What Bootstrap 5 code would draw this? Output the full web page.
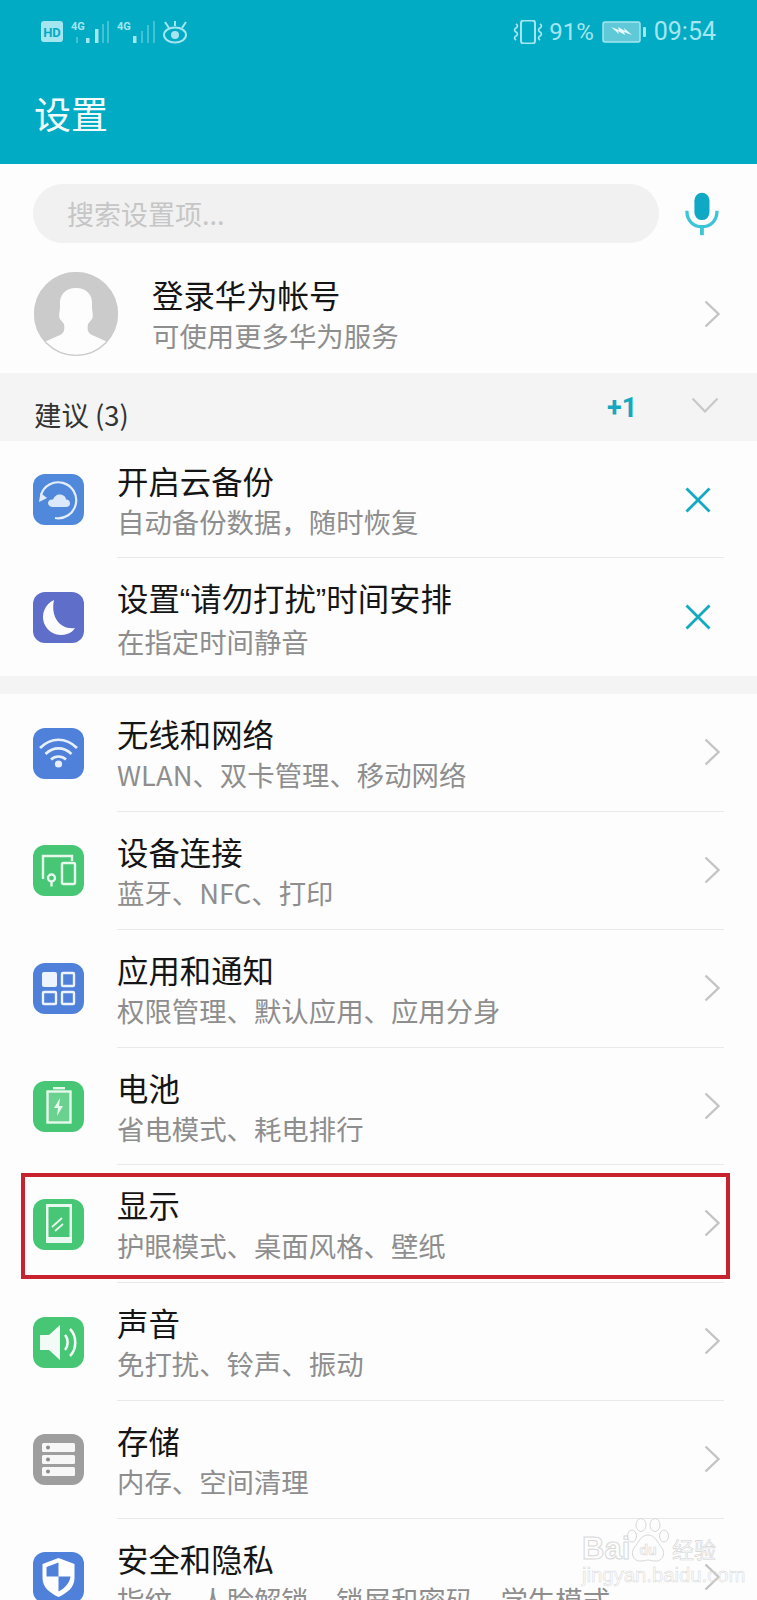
<!DOCTYPE html>
<html lang="zh">
<head>
    <meta charset="UTF-8">
    <title>设置</title>
    <link href="https://cdn.jsdelivr.net/npm/bootstrap@5.3.0/dist/css/bootstrap.min.css" rel="stylesheet">
    <style>
        html, body { height: 1600px; overflow: hidden; }
        body {
            position: relative;
            background: #fdfdfd;
            font-family: "Noto Sans CJK SC", "Noto Sans", sans-serif;
        }

        .app-head { height: 164px; background: #02abc4; color: #fff; padding: 20px 41px 0 34px; }
        .status-line { height: 24px; color: #a4e6ef; font: 24px/24px Roboto, sans-serif; margin-left: 7px; }
        .status-line svg { display: block; flex: none; }
        .status-time { font-size: 25px; }
        .app-title { font-size: 37px; line-height: 48px; margin-top: 45px; color: #f2fcfd; }

        .search-line { height: 79px; padding: 20px 38px 0 33px; }
        .search-box {
            width: 628px; height: 59px; border-radius: 30px; background: #f1f1f1; color: #c6c6c6;
            font-size: 27px; line-height: 59px; padding-left: 34px;
        }
        .mic { margin-left: 26px; margin-top: 8px; }

        .account-line { height: 130px; padding: 29px 37px 0 34px; }
        .avatar { width: 84px; height: 84px; flex: none; margin-right: 34px; }
        .account-text { margin-top: 3px; }
        .account-mark { margin-top: 28px; flex: none; }

        .row-title { font-size: 31.4px; line-height: 40px; color: #151515; white-space: nowrap; }
        .row-sub { font-size: 27.4px; line-height: 40px; color: #8e8e8e; white-space: nowrap; }
        .quote-mark { font-family: "Liberation Sans", sans-serif; }

        .section-head { height: 67.7px; background: #f4f4f4; padding: 0 39px 0 34px; position: relative; }
        .section-name { font-size: 27.4px; line-height: 36px; color: #333; padding-top: 23px; }
        .section-count { position: absolute; left: 607px; top: 17px; font: 700 27px/36px Roboto, sans-serif; color: #14a9bf; }
        .section-fold { position: absolute; left: 691px; top: 24px; }

        .set-row { height: 117.8px; padding: 0 33px; background: transparent; border: 0; border-radius: 0; }
        .set-icon { width: 51px; height: 51px; flex: none; border-radius: 12px; margin-right: 33px; display: block; }
        .set-body { height: 100%; min-width: 0; padding: 20px 4px 0 0; border-bottom: 1.5px solid #e9e9e9; }
        .set-row:last-child .set-body { border-bottom: 0; }
        .end-mark { margin-top: 24px; flex: none; }
        .end-close { margin: 26px 9px 0 0; flex: none; }
        .group-gap { height: 18px; background: #f4f4f4; }

        .red-frame { position: absolute; left: 21px; top: 1173px; width: 709px; height: 106px; border: 4px solid #c9222f; }

        .watermark { position: absolute; left: 582px; top: 1518px; width: 136px; height: 66px; color: transparent; -webkit-text-stroke: 1px #d8d8d8; }
        .wm-bai { position: absolute; left: 0; top: 14px; font: 700 31px/34px "Liberation Sans", sans-serif; }
        .wm-paw { position: absolute; left: 45px; top: 0; }
        .wm-jy { position: absolute; left: 90px; top: 16px; font-size: 22px; line-height: 28px; -webkit-text-stroke: 0.6px #d4d4d4; }
        .wm-url { position: absolute; left: 0; top: 47px; font: 20.3px/20px "Liberation Sans", sans-serif; -webkit-text-stroke: 0.5px #d8d8d8; white-space: nowrap; }
    </style>
</head>

<body>
<svg width="0" height="0" class="position-absolute">
    <symbol id="chev" viewBox="0 0 16 28"><path d="M1.500 1.500 14.500 14 1.500 26.500" fill="none" stroke="#c4c4c4" stroke-width="2.400"/></symbol>
    <symbol id="cross" viewBox="0 0 26 26"><path d="M1.500 1.500 24.500 24.500M24.500 1.500 1.500 24.500" fill="none" stroke="#12aac1" stroke-width="2.800"/></symbol>
</svg>

<header class="app-head">
    <div class="status-line d-flex align-items-center justify-content-between">
        <div class="d-flex align-items-center">
            <svg width="147" height="24" viewBox="0 0 147 24">
                <rect x="0" y="1" width="22" height="21" rx="3" fill="#a4e6ef"/>
                <text x="11" y="17" text-anchor="middle" font-family="Roboto" font-weight="700" font-size="13" fill="#02abc4">HD</text>
                <text x="30" y="10" font-family="Roboto" font-weight="700" font-size="11" fill="#a4e6ef">4G</text>
                <g fill="#a4e6ef">
                    <rect x="45" y="18" width="3.500" height="5"/><rect x="54" y="9" width="3.500" height="14"/>
                    <rect x="92" y="16" width="3.500" height="7"/>
                </g>
                <g fill="#a4e6ef" opacity=".4">
                    <rect x="35" y="17" width="2" height="6"/><rect x="61" y="4" width="2" height="19"/><rect x="66" y="1" width="2" height="22"/>
                    <rect x="100" y="11" width="2" height="12"/><rect x="106" y="5" width="2" height="18"/><rect x="112" y="1" width="2" height="22"/>
                </g>
                <text x="76" y="10" font-family="Roboto" font-weight="700" font-size="11" fill="#a4e6ef">4G</text>
                <g fill="none" stroke="#a4e6ef" stroke-width="2">
                    <ellipse cx="134" cy="15" rx="11" ry="7.500"/>
                    <path d="M124 2l4 6M134 1v5M145 2l-4 6"/>
                </g>
                <circle cx="134" cy="15" r="4" fill="#a4e6ef"/>
            </svg>
        </div>
        <div class="d-flex align-items-center">
            <svg width="32" height="24" viewBox="0 0 32 24">
                <rect x="8" y="0.500" width="14" height="23" rx="2.500" fill="none" stroke="#a4e6ef" stroke-width="2"/>
                <path d="M3 4q3 2 0 4t0 4 0 4 0 4M27 4q3 2 0 4t0 4 0 4 0 4" fill="none" stroke="#a4e6ef" stroke-width="1.600"/>
            </svg>
            <span class="ms-1">91%</span>
            <svg class="ms-2" width="44" height="22" viewBox="0 0 44 22">
                <rect x="1" y="1" width="37" height="20" rx="2" fill="#5fc9d8" stroke="#a4e6ef" stroke-width="1.500"/>
                <rect x="41" y="6" width="3" height="10" rx="1" fill="#a4e6ef"/>
                <path d="M9 6l8 3-1-3 7 4-1-3 8 7-8-3 1 3-7-4 1 3z" fill="#eafafc"/>
            </svg>
            <span class="ms-2 status-time">09:54</span>
        </div>
    </div>
    <div class="app-title">设置</div>
</header>

<div class="search-line d-flex align-items-start">
    <div class="search-box">搜索设置项...</div>
    <svg class="mic" width="34" height="44" viewBox="0 0 36 45">
        <rect x="10" y="0" width="16" height="29" rx="8" fill="#0fa9c6"/>
        <path d="M2 19c0 11 7 17 16 17s16-6 16-17" fill="none" stroke="#3cc4d8" stroke-width="3.500"/>
        <rect x="16" y="35" width="4" height="10" fill="#3cc4d8"/>
    </svg>
</div>

<div class="account-line d-flex align-items-start">
    <svg class="avatar" viewBox="0 0 84 84">
        <defs><clipPath id="avatar-clip"><circle cx="42" cy="42" r="41.500"/></clipPath></defs>
        <circle cx="42" cy="42" r="42" fill="#cbcbcb"/>
        <g clip-path="url(#avatar-clip)">
            <path d="M42 16c-11 0-17 7-16 18 .3 5-2 9 0 13l4 5c1 6 0 9-4 11L8 71 12 84H72L76 71 58 63c-4-2-5-5-4-11l4-5c2-4-.3-8 0-13 1-11-5-18-16-18z" fill="#fdfdfd"/>
        </g>
        <circle cx="42" cy="42" r="41.400" fill="none" stroke="#cbcbcb" stroke-width="1.200"/>
    </svg>
    <div class="account-text flex-grow-1">
        <div class="row-title">登录华为帐号</div>
        <div class="row-sub">可使用更多华为服务</div>
    </div>
    <svg class="account-mark" width="16" height="28"><use href="#chev"/></svg>
</div>

<div class="section-head">
    <div class="section-name">建议 (3)</div>
    <span class="section-count">+1</span>
    <svg class="section-fold" width="28" height="16" viewBox="0 0 28 16"><path d="M1.500 1.500 14 14.500 26.500 1.500" fill="none" stroke="#c8c8c8" stroke-width="2.200"/></svg>
</div>

<div class="list-group list-group-flush">
    <div class="list-group-item set-row d-flex align-items-center">
        <svg class="set-icon" viewBox="0 0 51 51">
            <rect width="51" height="51" fill="#5088dc"/>
            <path d="M8 21A18 18 0 1 1 22 44" fill="none" stroke="#e4eefb" stroke-width="2.200"/>
            <path d="M6 28l1.500-9 6.500 5z" fill="#e4eefb"/>
            <path d="M20 33c-3 0-5-2-5-4s2-4 5-3.500c1-3 3.500-5 6.500-5 4 0 6.500 2.500 6.500 5 2.500 0 4 1.500 4 3.700s-1.500 3.800-4 3.800z" fill="#dce9fa"/>
        </svg>
        <div class="set-body flex-grow-1 d-flex justify-content-between">
            <div>
                <div class="row-title">开启云备份</div>
                <div class="row-sub">自动备份数据，随时恢复</div>
            </div>
            <svg class="end-close" width="26" height="26"><use href="#cross"/></svg>
        </div>
    </div>
    <div class="list-group-item set-row d-flex align-items-center">
        <svg class="set-icon" viewBox="0 0 51 51">
            <rect width="51" height="51" fill="#5f6fc9"/>
            <path d="M21 8C12 12 8 22 11 31c4 10 14 14 23 11 4-1 6-3 8-6-13 2-25-9-21-28z" fill="#fcfcff"/>
        </svg>
        <div class="set-body flex-grow-1 d-flex justify-content-between">
            <div>
                <div class="row-title">设置<span class="quote-mark">“</span>请勿打扰<span class="quote-mark">”</span>时间安排</div>
                <div class="row-sub">在指定时间静音</div>
            </div>
            <svg class="end-close" width="26" height="26"><use href="#cross"/></svg>
        </div>
    </div>
</div>

<div class="group-gap"></div>

<div class="list-group list-group-flush">
    <div class="list-group-item set-row d-flex align-items-center">
        <svg class="set-icon" viewBox="0 0 51 51">
            <rect width="51" height="51" fill="#4f80da"/>
            <g fill="none" stroke="#e6effb" stroke-width="2.600">
                <path d="M7 20c11-11 26-11 37 0"/><path d="M12.500 26c8-7.500 18-7.500 26 0"/><path d="M18 31.500c4.500-4 10.500-4 15 0"/>
            </g>
            <circle cx="25.500" cy="36" r="3.600" fill="#e6effb"/>
        </svg>
        <div class="set-body flex-grow-1 d-flex justify-content-between">
            <div>
                <div class="row-title">无线和网络</div>
                <div class="row-sub">WLAN、双卡管理、移动网络</div>
            </div>
            <svg class="end-mark" width="16" height="28"><use href="#chev"/></svg>
        </div>
    </div>
    <div class="list-group-item set-row d-flex align-items-center">
        <svg class="set-icon" viewBox="0 0 51 51">
            <rect width="51" height="51" fill="#47c675"/>
            <g fill="none" stroke="#e6f8ec" stroke-width="2.400">
                <path d="M10 34V11h29v5"/>
                <rect x="29" y="18" width="13" height="21" rx="1.500"/>
                <circle cx="18.500" cy="33" r="3.500"/>
                <path d="M18.500 36.500v5"/>
            </g>
        </svg>
        <div class="set-body flex-grow-1 d-flex justify-content-between">
            <div>
                <div class="row-title">设备连接</div>
                <div class="row-sub">蓝牙、NFC、打印</div>
            </div>
            <svg class="end-mark" width="16" height="28"><use href="#chev"/></svg>
        </div>
    </div>
    <div class="list-group-item set-row d-flex align-items-center">
        <svg class="set-icon" viewBox="0 0 51 51">
            <rect width="51" height="51" fill="#4f80da"/>
            <rect x="9" y="9" width="15" height="15" rx="2" fill="#eef4fd"/>
            <g fill="none" stroke="#eef4fd" stroke-width="2.400">
                <rect x="29" y="10" width="12" height="13" rx="1"/>
                <rect x="10" y="29" width="13" height="12" rx="1"/>
                <rect x="29" y="29" width="12" height="12" rx="1"/>
            </g>
        </svg>
        <div class="set-body flex-grow-1 d-flex justify-content-between">
            <div>
                <div class="row-title">应用和通知</div>
                <div class="row-sub">权限管理、默认应用、应用分身</div>
            </div>
            <svg class="end-mark" width="16" height="28"><use href="#chev"/></svg>
        </div>
    </div>
    <div class="list-group-item set-row d-flex align-items-center">
        <svg class="set-icon" viewBox="0 0 51 51">
            <rect width="51" height="51" fill="#47c675"/>
            <rect x="14.500" y="10.500" width="23" height="31" fill="#d5f3e0" fill-opacity=".25" stroke="#e6f8ec" stroke-width="2.400"/>
            <rect x="20" y="6" width="12" height="2.400" fill="#e6f8ec"/>
            <path d="M27 17l-6 10h4l-1 8 6-10h-4z" fill="#e6f8ec"/>
        </svg>
        <div class="set-body flex-grow-1 d-flex justify-content-between">
            <div>
                <div class="row-title">电池</div>
                <div class="row-sub">省电模式、耗电排行</div>
            </div>
            <svg class="end-mark" width="16" height="28"><use href="#chev"/></svg>
        </div>
    </div>
    <div class="list-group-item set-row d-flex align-items-center">
        <svg class="set-icon" viewBox="0 0 51 51">
            <rect width="51" height="51" fill="#47c675"/>
            <path d="M13 5h26v39H13z" fill="#e9f9ef"/>
            <rect x="15.500" y="8" width="21" height="30" fill="#47c675"/>
            <path d="M19 28l10-9M22 32l8-7" fill="none" stroke="#e9f9ef" stroke-width="1.800"/>
        </svg>
        <div class="set-body flex-grow-1 d-flex justify-content-between">
            <div>
                <div class="row-title">显示</div>
                <div class="row-sub">护眼模式、桌面风格、壁纸</div>
            </div>
            <svg class="end-mark" width="16" height="28"><use href="#chev"/></svg>
        </div>
    </div>
    <div class="list-group-item set-row d-flex align-items-center">
        <svg class="set-icon" viewBox="0 0 51 51">
            <rect width="51" height="51" fill="#47c675"/>
            <path d="M7 18h9l11-10v35L16 33H7z" fill="#f2fbf5"/>
            <path d="M32 18c3.500 4 3.500 11 0 15M37 12c7 7 7 20 0 27" fill="none" stroke="#f2fbf5" stroke-width="2.600"/>
        </svg>
        <div class="set-body flex-grow-1 d-flex justify-content-between">
            <div>
                <div class="row-title">声音</div>
                <div class="row-sub">免打扰、铃声、振动</div>
            </div>
            <svg class="end-mark" width="16" height="28"><use href="#chev"/></svg>
        </div>
    </div>
    <div class="list-group-item set-row d-flex align-items-center">
        <svg class="set-icon" viewBox="0 0 51 51">
            <rect width="51" height="51" fill="#9e9e9e"/>
            <g fill="#f7f7f7">
                <rect x="9" y="9" width="33" height="9" rx="1.500"/>
                <rect x="9" y="21" width="33" height="9" rx="1.500"/>
                <rect x="9" y="33" width="33" height="9" rx="1.500"/>
            </g>
            <g fill="#8c8c8c">
                <circle cx="15" cy="13.500" r="2"/><circle cx="15" cy="25.500" r="2"/><circle cx="15" cy="37.500" r="2"/>
            </g>
        </svg>
        <div class="set-body flex-grow-1 d-flex justify-content-between">
            <div>
                <div class="row-title">存储</div>
                <div class="row-sub">内存、空间清理</div>
            </div>
            <svg class="end-mark" width="16" height="28"><use href="#chev"/></svg>
        </div>
    </div>
    <div class="list-group-item set-row d-flex align-items-center">
        <svg class="set-icon" viewBox="0 0 51 51">
            <rect width="51" height="51" fill="#4f80da"/>
            <path d="M25.500 6l16 6v14c0 9-7 15-16 19-9-4-16-10-16-19V12z" fill="#fff"/>
            <path d="M25.500 10.500v14H13.500V15zM25.500 24.500h12c-1 7-6 12-12 15z" fill="#4f80da"/>
        </svg>
        <div class="set-body flex-grow-1 d-flex justify-content-between">
            <div>
                <div class="row-title">安全和隐私</div>
                <div class="row-sub">指纹、人脸解锁、锁屏和密码、学生模式</div>
            </div>
            <svg class="end-mark" width="16" height="28"><use href="#chev"/></svg>
        </div>
    </div>
</div>

<div class="red-frame"></div>

<div class="watermark">
    <span class="wm-bai">Bai</span>
    <svg class="wm-paw" width="42" height="50" viewBox="0 0 42 50">
        <g fill="#fdfdfd" fill-opacity=".6" stroke="#d8d8d8" stroke-width="1">
            <ellipse cx="14" cy="7" rx="5" ry="6.500"/><ellipse cx="28" cy="7" rx="5" ry="6.500"/>
            <ellipse cx="5" cy="18" rx="4.500" ry="6"/><ellipse cx="37" cy="18" rx="4.500" ry="6"/>
            <path d="M21 17c7 0 9 7 14 13 4 6 0 14-7 13-3 0-5-1-7-1s-4 1-7 1c-7 1-11-7-7-13 5-6 7-13 14-13z"/>
        </g>
        <text x="21" y="37" text-anchor="middle" font-family="Liberation Sans" font-weight="700" font-size="14" fill="#fdfdfd" stroke="#d8d8d8" stroke-width=".6">du</text>
    </svg>
    <span class="wm-jy">经验</span>
    <span class="wm-url">jingyan.baidu.com</span>
</div>

</body>
</html>
